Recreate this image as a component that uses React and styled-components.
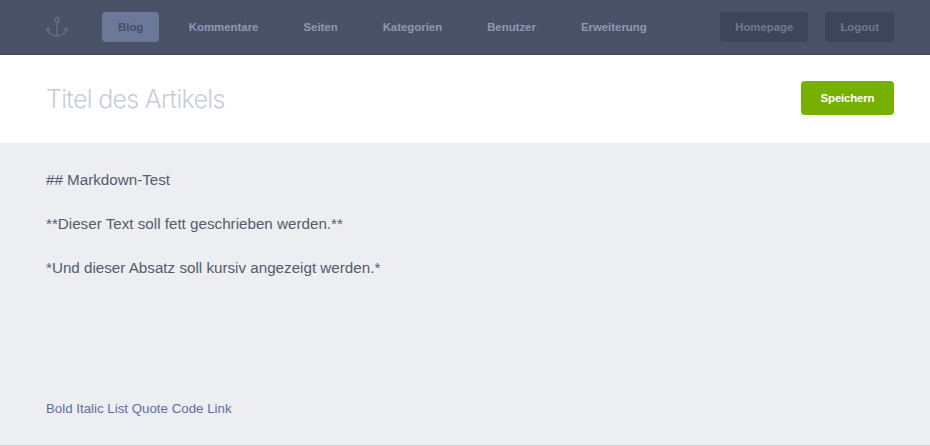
import styled, { createGlobalStyle } from "styled-components";

const GlobalStyle = createGlobalStyle`
  html, body {
    margin: 0;
    padding: 0;
    background: #eceef2;
  }
  body {
    font-family: "Liberation Sans", Arial, sans-serif;
    -webkit-font-smoothing: antialiased;
  }
`;

const Page = styled.div`
  width: 930px;
  height: 446px;
  display: flex;
  flex-direction: column;
  overflow: hidden;
  box-sizing: border-box;
  border-bottom: 1px solid #c9cbd0;
`;

const TopBar = styled.header`
  height: 55px;
  box-sizing: border-box;
  padding: 12px 36px 0 46px;
  display: flex;
  align-items: flex-start;
  background: repeating-linear-gradient(90deg, #4a5268 0 2px, #495166 2px 4px);
  border-bottom: 1px solid #434a5e;
`;

const Logo = styled.svg`
  width: 22px;
  height: 22px;
  margin: 4px 34px 0 0;
  fill: none;
  stroke: #626d8a;
  stroke-width: 1.4;
  stroke-linecap: round;
  stroke-linejoin: round;
`;

const Nav = styled.nav`
  display: flex;
  flex: 1;
`;

const NavItem = styled.a`
  height: 30px;
  box-sizing: border-box;
  padding: 0 ${(p) => (p.$active ? "16px" : "22.5px")};
  margin-right: ${(p) => (p.$active ? "7px" : "0")};
  padding-bottom: 1px;
  display: flex;
  align-items: center;
  font-size: 11.4px;
  font-weight: 700;
  border-radius: 4px;
  color: ${(p) => (p.$active ? "#454e66" : "#8f99b5")};
  background: ${(p) => (p.$active ? "#6c7899" : "transparent")};
`;

const SideActions = styled.div`
  display: flex;
  gap: 17px;
`;

const SideButton = styled.a`
  height: 30px;
  box-sizing: border-box;
  padding: 0 15px 1px;
  display: flex;
  align-items: center;
  font-size: 11.4px;
  font-weight: 700;
  border-radius: 4px;
  color: #707990;
  background: #3e4558;
`;

const TitleRow = styled.div`
  height: 88px;
  box-sizing: border-box;
  padding: 0 36px 0 46px;
  display: flex;
  align-items: center;
  justify-content: space-between;
  background: #fff;
`;

const Title = styled.h1`
  margin: 0;
  font-family: Inter, "Liberation Sans", sans-serif;
  font-size: 25px;
  font-weight: 300;
  letter-spacing: -0.7px;
  color: #c8cdd9;
`;

const SaveButton = styled.button`
  width: 93px;
  height: 34px;
  margin-bottom: 2px;
  border: 0;
  padding: 0;
  border-radius: 4px;
  background: #76b000;
  color: #fff;
  font-family: inherit;
  font-size: 11.5px;
  font-weight: 700;
  letter-spacing: -0.2px;
`;

const Editor = styled.main`
  flex: 1;
  padding: 27px 46px 0;
  display: flex;
  flex-direction: column;
`;

const Line = styled.p`
  margin: 0 0 24px;
  font-size: 15.2px;
  line-height: 20px;
  color: #555b6b;
`;

const Toolbar = styled.div`
  margin-top: auto;
  padding-bottom: 28px;
  display: flex;
  gap: 3.7px;
  font-size: 13.3px;
  line-height: 17px;
`;

const ToolLink = styled.a`
  color: #5f6f9c;
`;

const navItems = ["Kommentare", "Seiten", "Kategorien", "Benutzer", "Erweiterung"];
const tools = ["Bold", "Italic", "List", "Quote", "Code", "Link"];

export default function App() {
  return (
    <>
      <GlobalStyle />
      <Page>
        <TopBar>
          <Logo viewBox="0 0 22 22">
            <circle cx="11" cy="4" r="2.2" />
            <path d="M11 6.2V20" />
            <path d="M1.5 12.5c.5 4.5 5 7.5 9.5 7.5s9-3 9.5-7.5" />
            <path d="M0.5 14.5l1-2.5 2.4 1.4M21.5 14.5l-1-2.5-2.4 1.4" />
          </Logo>
          <Nav>
            <NavItem $active>Blog</NavItem>
            {navItems.map((item) => (
              <NavItem key={item}>{item}</NavItem>
            ))}
          </Nav>
          <SideActions>
            <SideButton>Homepage</SideButton>
            <SideButton>Logout</SideButton>
          </SideActions>
        </TopBar>
        <TitleRow>
          <Title>Titel des Artikels</Title>
          <SaveButton>Speichern</SaveButton>
        </TitleRow>
        <Editor>
          <Line>## Markdown-Test</Line>
          <Line>**Dieser Text soll fett geschrieben werden.**</Line>
          <Line>*Und dieser Absatz soll kursiv angezeigt werden.*</Line>
          <Toolbar>
            {tools.map((tool) => (
              <ToolLink key={tool}>{tool}</ToolLink>
            ))}
          </Toolbar>
        </Editor>
      </Page>
    </>
  );
}
